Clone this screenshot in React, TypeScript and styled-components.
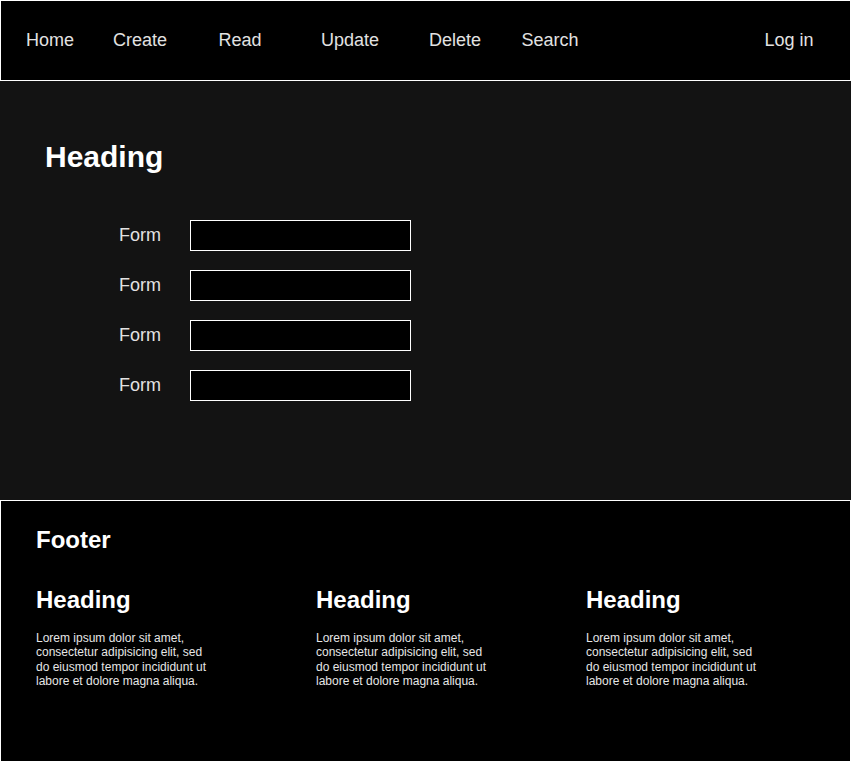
import styled, { createGlobalStyle } from "styled-components";

const GlobalStyle = createGlobalStyle`
    html, body {
        margin: 0;
        padding: 0;
        background: #000;
    }
    body {
        font-family: "Liberation Sans", Arial, sans-serif;
    }
    * {
        box-sizing: border-box;
    }
`

const Page = styled.div`
    width: 851px;
    display: flex;
    flex-direction: column;
`

const Nav = styled.nav`
    height: 81px;
    border: 1px solid #fff;
    background: #000;
    display: flex;
    align-items: center;
    padding: 0 9px;
`

const NavItem = styled.a<{ $w: number }>`
    width: ${(p) => p.$w}px;
    text-align: center;
    color: #e2e2e2;
    font-size: 18px;
    line-height: 21px;
    text-decoration: none;
`

const Spacer = styled.div`
    flex: 1;
`

const Main = styled.main`
    height: 419px;
    background: #131313;
    padding: 58px 0 0 45px;
`

const H1 = styled.h1`
    margin: 0 0 45px;
    font-size: 30px;
    line-height: 36px;
    font-weight: 700;
    color: #fff;
`

const FormGrid = styled.form`
    display: grid;
    grid-template-columns: 80px 221px;
    column-gap: 10px;
    row-gap: 19px;
    margin-left: 55px;
    align-items: center;
`

const Label = styled.label`
    text-align: center;
    color: #e2e2e2;
    font-size: 18px;
    line-height: 21px;
`

const Input = styled.input`
    width: 221px;
    height: 31px;
    border: 1px solid #fff;
    background: #000;
    color: #fff;
    outline: none;
    padding: 0 6px;
`

const Footer = styled.footer`
    height: 261px;
    background: #000;
    border: 1px solid #fff;
    border-bottom: none;
    padding: 25px 0 0 35px;
`

const FooterTitle = styled.h2`
    margin: 0 0 32px;
    font-size: 24px;
    line-height: 28px;
    font-weight: 700;
    color: #fff;
`

const Columns = styled.div`
    display: grid;
    grid-template-columns: 280px 270px 1fr;
`

const ColHeading = styled.h3`
    margin: 0 0 17px;
    font-size: 24px;
    line-height: 28px;
    font-weight: 700;
    color: #fff;
`

const ColText = styled.p`
    margin: 0;
    width: 180px;
    font-size: 12px;
    line-height: 14.4px;
    color: #e6e6e6;
`

const navLinks = [
    { label: "Home", w: 80 },
    { label: "Create", w: 100 },
    { label: "Read", w: 100 },
    { label: "Update", w: 120 },
    { label: "Delete", w: 90 },
    { label: "Search", w: 100 },
];

const lorem = "Lorem ipsum dolor sit amet, consectetur adipisicing elit, sed do eiusmod tempor incididunt ut labore et dolore magna aliqua.";

export default function App() {
    return (
        <Page>
            <GlobalStyle />
            <Nav>
                {navLinks.map((l) => (
                    <NavItem key={l.label} $w={l.w} href="#">{l.label}</NavItem>
                ))}
                <Spacer />
                <NavItem $w={104} href="#">Log in</NavItem>
            </Nav>

            <Main>
                <H1>Heading</H1>
                <FormGrid onSubmit={(e) => e.preventDefault()}>
                    {[1, 2, 3, 4].map((n) => (
                        <>
                            <Label key={`l${n}`} htmlFor={`f${n}`}>Form</Label>
                            <Input key={`i${n}`} id={`f${n}`} type="text" />
                        </>
                    ))}
                </FormGrid>
            </Main>

            <Footer>
                <FooterTitle>Footer</FooterTitle>
                <Columns>
                    {[1, 2, 3].map((n) => (
                        <div key={n}>
                            <ColHeading>Heading</ColHeading>
                            <ColText>{lorem}</ColText>
                        </div>
                    ))}
                </Columns>
            </Footer>
        </Page>
    )
}
